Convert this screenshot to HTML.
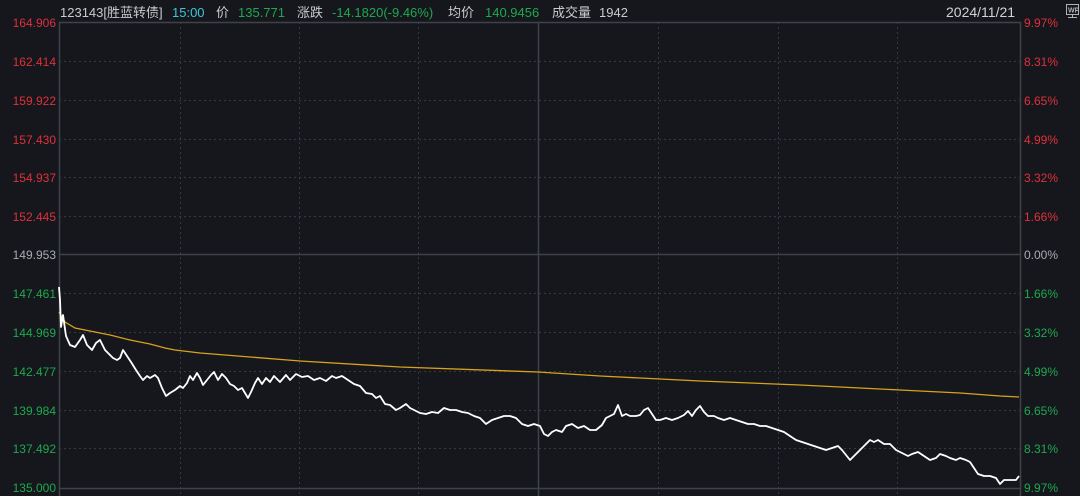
<!DOCTYPE html>
<html><head><meta charset="utf-8"><style>
html,body{margin:0;padding:0;background:#15171c;width:1080px;height:496px;overflow:hidden}
svg text{font-family:"Liberation Sans","Noto Sans CJK SC",sans-serif}
</style></head><body>
<svg width="1080" height="496" viewBox="0 0 1080 496" xmlns="http://www.w3.org/2000/svg">
<rect width="1080" height="496" fill="#15171c"/>
<g stroke="#363940" stroke-width="1" stroke-dasharray="2,3">
<line x1="59" y1="61.5" x2="1021" y2="61.5"/><line x1="59" y1="100.5" x2="1021" y2="100.5"/>
<line x1="59" y1="139.5" x2="1021" y2="139.5"/><line x1="59" y1="177.5" x2="1021" y2="177.5"/>
<line x1="59" y1="216.5" x2="1021" y2="216.5"/><line x1="59" y1="293.5" x2="1021" y2="293.5"/>
<line x1="59" y1="332.5" x2="1021" y2="332.5"/><line x1="59" y1="371.5" x2="1021" y2="371.5"/>
<line x1="59" y1="410.5" x2="1021" y2="410.5"/><line x1="59" y1="448.5" x2="1021" y2="448.5"/>
<line x1="180.5" y1="22" x2="180.5" y2="496"/><line x1="299.5" y1="22" x2="299.5" y2="496"/>
<line x1="418.5" y1="22" x2="418.5" y2="496"/><line x1="658.5" y1="22" x2="658.5" y2="496"/>
<line x1="778.5" y1="22" x2="778.5" y2="496"/><line x1="897.5" y1="22" x2="897.5" y2="496"/>
</g>
<g stroke="#3f4249" stroke-width="1.5" fill="none">
<rect x="59.5" y="22.5" width="961" height="480"/>
<line x1="59" y1="254.5" x2="1021" y2="254.5"/>
<line x1="538.5" y1="22" x2="538.5" y2="496"/>
<line x1="59" y1="488.5" x2="1021" y2="488.5"/>
</g>
<polyline fill="none" stroke="#d9a21b" stroke-width="1.3" points="59,312 65,322 75,328 90,331 110,335 130,340 150,344 165,348 175,350 200,353 250,357 300,361 400,367 538,372 600,376 700,381 800,385 900,390 960,393 1000,396 1019,397"/>
<polyline fill="none" stroke="#ffffff" stroke-width="1.8" stroke-linejoin="round" points="59,287 60,300 61,327 63,315 64,322 66,336 70,345 75,347 80,340 83,335 87,345 92,350 96,343 100,340 105,350 110,355 113,358 117,360 120,358 123,350 127,356 131,362 136,370 140,376 143,380 147,376 150,378 155,375 158,378 162,388 166,396 170,393 175,390 180,386 183,388 187,383 190,376 193,380 197,373 200,378 203,385 207,380 211,375 214,372 218,380 222,374 226,378 230,384 234,386 238,390 242,388 248,398 251,392 255,383 258,378 262,384 266,378 270,382 274,376 280,382 286,375 290,380 296,374 302,377 308,376 314,380 320,378 326,381 332,376 336,378 342,376 348,380 354,384 360,386 366,393 372,394 376,398 380,396 385,404 390,405 396,410 400,408 406,404 410,408 414,410 420,413 426,414 432,412 438,413 444,408 450,410 456,410 462,412 468,413 474,416 480,418 486,424 492,420 498,418 504,416 510,416 516,418 522,424 528,426 534,424 540,426 544,434 548,436 552,432 556,430 562,432 566,426 572,424 578,428 584,426 590,430 596,430 602,425 606,418 610,416 614,414 618,405 622,416 626,414 630,416 636,416 640,415 644,410 648,408 652,414 656,420 660,420 666,418 672,420 678,418 684,415 688,411 692,416 696,410 700,406 704,412 708,416 714,416 718,418 724,420 730,418 736,420 742,422 748,424 754,424 760,426 766,426 772,428 778,430 784,432 790,436 796,440 802,442 808,444 814,446 820,448 826,450 832,448 838,446 842,450 846,455 850,460 854,456 858,452 862,448 866,444 870,440 874,442 878,440 884,444 890,444 896,450 900,452 904,454 908,456 912,454 918,452 924,456 930,460 936,458 940,454 946,456 950,458 956,460 960,458 966,460 970,462 974,468 978,474 984,476 990,476 996,478 1000,484 1004,480 1010,480 1016,480 1019,476"/>
<g font-size="12" text-anchor="end">
<text x="56" y="27" fill="#e0303a">164.906</text><text x="56" y="66" fill="#e0303a">162.414</text>
<text x="56" y="105" fill="#e0303a">159.922</text><text x="56" y="144" fill="#e0303a">157.430</text>
<text x="56" y="182" fill="#e0303a">154.937</text><text x="56" y="221" fill="#e0303a">152.445</text>
<text x="56" y="259" fill="#a8abb2">149.953</text><text x="56" y="298" fill="#1fa84f">147.461</text>
<text x="56" y="337" fill="#1fa84f">144.969</text><text x="56" y="376" fill="#1fa84f">142.477</text>
<text x="56" y="415" fill="#1fa84f">139.984</text><text x="56" y="453" fill="#1fa84f">137.492</text>
<text x="56" y="492" fill="#1fa84f">135.000</text>
</g>
<g font-size="12">
<text x="1024" y="27" fill="#e0303a">9.97%</text><text x="1024" y="66" fill="#e0303a">8.31%</text>
<text x="1024" y="105" fill="#e0303a">6.65%</text><text x="1024" y="144" fill="#e0303a">4.99%</text>
<text x="1024" y="182" fill="#e0303a">3.32%</text><text x="1024" y="221" fill="#e0303a">1.66%</text>
<text x="1024" y="259" fill="#a8abb2">0.00%</text><text x="1024" y="298" fill="#1fa84f">1.66%</text>
<text x="1024" y="337" fill="#1fa84f">3.32%</text><text x="1024" y="376" fill="#1fa84f">4.99%</text>
<text x="1024" y="415" fill="#1fa84f">6.65%</text><text x="1024" y="453" fill="#1fa84f">8.31%</text>
<text x="1024" y="492" fill="#1fa84f">9.97%</text>
</g>
<g font-size="13">
<text x="60" y="17" fill="#c8cad0">123143[胜蓝转债]</text>
<text x="172" y="17" fill="#3cc6d8">15:00</text>
<text x="216" y="17" fill="#c8cad0">价</text>
<text x="238" y="17" fill="#1fa84f">135.771</text>
<text x="297" y="17" fill="#c8cad0">涨跌</text>
<text x="332" y="17" fill="#1fa84f">-14.1820(-9.46%)</text>
<text x="448" y="17" fill="#c8cad0">均价</text>
<text x="485" y="17" fill="#1fa84f">140.9456</text>
<text x="552" y="17" fill="#c8cad0">成交量</text>
<text x="599" y="17" fill="#c8cad0">1942</text>
<text x="946" y="17" fill="#d0d2d8" font-size="14">2024/11/21</text>
</g>
<rect x="1066.5" y="4.5" width="12" height="10" fill="none" stroke="#b0b2b8" stroke-width="1"/>
<text x="1068" y="12.5" font-size="7" fill="#b0b2b8" font-weight="bold">WP</text>
<line x1="1072.5" y1="15" x2="1072.5" y2="17" stroke="#b0b2b8"/><line x1="1068" y1="17.5" x2="1077" y2="17.5" stroke="#b0b2b8"/>
</svg>
</body></html>
